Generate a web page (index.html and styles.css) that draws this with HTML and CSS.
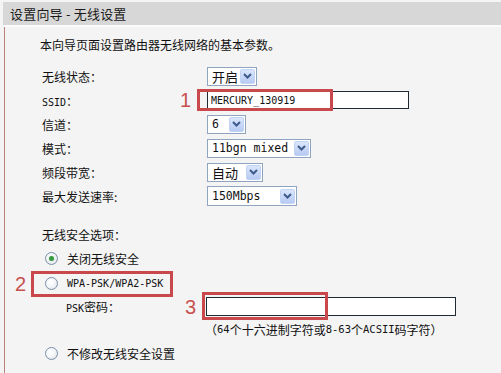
FILE: index.html
```html
<!DOCTYPE html>
<html lang="zh">
<head>
<meta charset="utf-8">
<title>设置向导 - 无线设置</title>
<link rel="stylesheet" href="styles.css">
</head>
<body>
<div class="page">
  <div class="header"><span class="header-text">设置向导 - 无线设置</span></div>
  <div class="content">
    <p class="intro">本向导页面设置路由器无线网络的基本参数。</p>
    <div class="form">
      <div class="row">
        <div class="label">无线状态：</div>
        <div class="sel"><span class="sel-text cjk">开启</span><span class="sel-btn"><svg width="9" height="6" viewBox="0 0 9 6"><path d="M1 1 L4.5 4.5 L8 1" fill="none" stroke="#3c5a8c" stroke-width="2"/></svg></span></div>
      </div>
      <div class="row">
        <div class="label"><span class="mono">SSID</span>：</div>
        <div class="field">
          <div class="input wide"><span class="mono">MERCURY_130919</span></div>
          <span class="mark mark-1">1</span>
          <div class="redbox box-1"></div>
        </div>
      </div>
      <div class="row">
        <div class="label">信道：</div>
        <div class="sel w-channel"><span class="sel-text mono-s">6</span><span class="sel-btn"><svg width="9" height="6" viewBox="0 0 9 6"><path d="M1 1 L4.5 4.5 L8 1" fill="none" stroke="#3c5a8c" stroke-width="2"/></svg></span></div>
      </div>
      <div class="row">
        <div class="label">模式：</div>
        <div class="sel w-mode"><span class="sel-text mono-s">11bgn mixed</span><span class="sel-btn"><svg width="9" height="6" viewBox="0 0 9 6"><path d="M1 1 L4.5 4.5 L8 1" fill="none" stroke="#3c5a8c" stroke-width="2"/></svg></span></div>
      </div>
      <div class="row">
        <div class="label">频段带宽：</div>
        <div class="sel w-auto"><span class="sel-text cjk">自动</span><span class="sel-btn"><svg width="9" height="6" viewBox="0 0 9 6"><path d="M1 1 L4.5 4.5 L8 1" fill="none" stroke="#3c5a8c" stroke-width="2"/></svg></span></div>
      </div>
      <div class="row">
        <div class="label">最大发送速率:</div>
        <div class="sel w-rate"><span class="sel-text mono-s">150Mbps</span><span class="sel-btn"><svg width="9" height="6" viewBox="0 0 9 6"><path d="M1 1 L4.5 4.5 L8 1" fill="none" stroke="#3c5a8c" stroke-width="2"/></svg></span></div>
      </div>
    </div>

    <div class="security">
      <div class="sec-title">无线安全选项：</div>
      <div class="radio-row"><span class="radio checked"></span><span>关闭无线安全</span></div>
      <div class="radio-row wpa">
        <span class="mark mark-2">2</span>
        <div class="redbox box-2"></div>
        <span class="radio"></span><span class="mono">WPA-PSK/WPA2-PSK</span>
      </div>
      <div class="psk-row">
        <div class="psk-label"><span class="mono">PSK</span>密码：</div>
        <div class="field">
          <div class="input psk"></div>
          <span class="mark mark-3">3</span>
          <div class="redbox box-3"></div>
        </div>
      </div>
      <div class="hint">（<span class="mono">64</span>个十六进制字符或<span class="mono">8-63</span>个<span class="mono">ACSII</span>码字符）</div>
      <div class="radio-row last"><span class="radio"></span><span>不修改无线安全设置</span></div>
    </div>
  </div>
</div>
</body>
</html>
```

FILE: styles.css
```css
* { box-sizing: border-box; }
html, body {
  margin: 0;
  padding: 0;
  background: #f4f4f4;
}
body {
  font-family: "Noto Sans CJK SC", "Noto Sans", sans-serif;
  font-size: 12px;
  color: #111;
  width: 501px;
  height: 373px;
  overflow: hidden;
}
.page {
  height: 373px;
  display: flex;
  flex-direction: column;
}
.header {
  margin: 2px 0 0 3px;
  height: 23px;
  background: #d7d7d7;
  display: flex;
  align-items: center;
  padding-left: 7px;
  border-bottom: 2px solid #fbfbfb;
  box-sizing: content-box;
}
.header-text {
  font-size: 13px;
  color: #1a1a1a;
  letter-spacing: 0.2px;
}
.content {
  flex: 1;
  margin-left: 4px;
  border-left: 1px solid #b9837a;
  padding-left: 35px;
}
.intro {
  margin: 9px 0 0 0;
  height: 18px;
  line-height: 18px;
  font-size: 12px;
}
.mono {
  font-family: "DejaVu Sans Mono", "Liberation Mono", monospace;
  font-size: 10px;
}
.mono-s {
  font-family: "DejaVu Sans Mono", "Liberation Mono", monospace;
  font-size: 11.5px;
}
.form {
  margin-top: 10px;
  padding-left: 2px;
}
.row {
  display: flex;
  align-items: center;
  height: 24px;
}
.label {
  width: 165px;
  flex: none;
}
.sel {
  display: flex;
  align-items: center;
  height: 19px;
  width: 50px;
  border: 1px solid #8ea4bf;
  background: #fff;
  justify-content: space-between;
  padding: 1px;
}
.sel-text {
  padding-left: 3px;
  line-height: 15px;
}
.sel-text.cjk { font-size: 13px; }
.sel-btn {
  width: 15px;
  height: 15px;
  flex: none;
  background: linear-gradient(#dbe6fc, #b7caf2);
  border: 1px solid #c3d3f5;
  border-radius: 2px;
  display: flex;
  align-items: center;
  justify-content: center;
}
.w-channel { width: 39px; }
.w-mode { width: 104px; }
.w-auto { width: 56px; }
.w-rate { width: 90px; height: 20px; }
.field {
  position: relative;
  display: flex;
}
.input {
  height: 18px;
  border: 1px solid #1f2a33;
  background: #fff;
  display: flex;
  align-items: center;
  padding-left: 3px;
}
.input.wide { width: 202px; }
.input.psk { width: 250px; height: 19px; }
.redbox {
  position: absolute;
  border: 3px solid #c9484c;
  pointer-events: none;
}
.mark {
  position: absolute;
  font-family: "Liberation Sans", sans-serif;
  font-size: 20px;
  color: #c8504f;
  line-height: 20px;
}
.box-1 { left: -10px; top: -2px; width: 136px; height: 22px; }
.mark-1 { left: -27px; top: -1px; }
.security {
  margin-top: 14px;
  padding-left: 2px;
}
.sec-title {
  height: 24px;
  display: flex;
  align-items: center;
}
.radio-row {
  position: relative;
  display: flex;
  align-items: center;
  height: 25px;
  padding-left: 3px;
  gap: 9px;
}
.radio {
  width: 13px;
  height: 13px;
  border-radius: 50%;
  border: 1px solid #7b8fa9;
  background: radial-gradient(circle at 40% 40%, #ffffff 0%, #f4f6f8 45%, #d3d9e0 100%);
  display: flex;
  align-items: center;
  justify-content: center;
  flex: none;
}
.radio.checked::after {
  content: "";
  width: 5px;
  height: 5px;
  border-radius: 50%;
  background: #3c9a46;
  box-shadow: 0 0 1px #7fcf80;
}
.wpa { height: 25px; }
.box-2 { left: -11px; top: 0px; width: 142px; height: 26px; }
.mark-2 { left: -27px; top: 3px; }
.psk-row {
  display: flex;
  align-items: center;
  height: 21px;
}
.psk-label {
  width: 164px;
  padding-left: 24px;
  flex: none;
}
.box-3 { left: -4px; top: -5px; width: 126px; height: 28px; }
.mark-3 { left: -21px; top: 0px; }
.hint {
  height: 24px;
  display: flex;
  align-items: center;
  padding-left: 163px;
  font-size: 12px;
  white-space: nowrap;
}
.hint .mono { font-size: 10.5px; }
.radio-row.last { height: 24px; margin-top: 0px; }
```
